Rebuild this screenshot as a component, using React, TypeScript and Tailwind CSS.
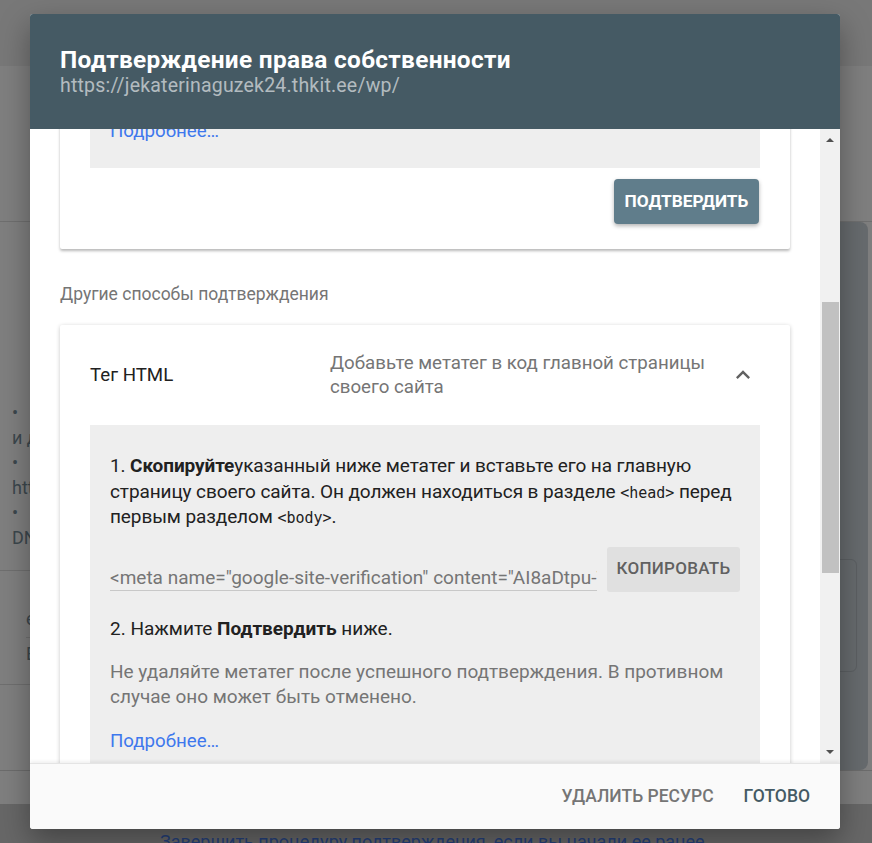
function ExpandLess() {
  return (
    <svg viewBox="0 0 24 24" className="w-[28px] h-[28px] fill-[#616161]">
      <path d="M12 8l-6 6 1.41 1.41L12 10.83l4.59 4.58L18 14z" />
    </svg>
  );
}

function FakeScrollbar() {
  return (
    <div className="w-[20px] shrink-0 bg-[#f1f1f1] flex flex-col items-center">
      <div className="h-[22px] flex items-center justify-center">
        <div className="w-0 h-0 border-l-[4px] border-r-[4px] border-b-[4px] border-l-transparent border-r-transparent border-b-[#505050]" />
      </div>
      <div className="h-[151px]" />
      <div className="w-[17px] h-[271px] bg-[#c1c1c1]" />
      <div className="flex-1" />
      <div className="h-[22px] flex items-center justify-center">
        <div className="w-0 h-0 border-l-[4px] border-r-[4px] border-t-[4px] border-l-transparent border-r-transparent border-t-[#505050]" />
      </div>
    </div>
  );
}

function BackgroundPage() {
  return (
    <div className="flex flex-col h-[843px] bg-[#7f7f7f] text-[#3c474d] text-[18px]">
      <div className="h-[66px] shrink-0 bg-[#787878]" />
      <div className="h-[156px] shrink-0 border-b border-[#6f6f6f]" />
      <div className="h-[549px] shrink-0 flex border-b border-[#6c6c6c]">
        <div className="w-[560px] shrink-0 flex flex-col">
          <div className="pl-[12px] pt-[178px] leading-[25px]">
            <div className="flex gap-[24px]"><span>•</span><span>Префикс URL: только адреса с указанным префиксом</span></div>
            <div>и другие протоколы</div>
            <div className="flex gap-[24px]"><span>•</span><span>Включает только URL с префиксом</span></div>
            <div>https://</div>
            <div className="flex gap-[24px]"><span>•</span><span>Требуется подтверждение через</span></div>
            <div>DNS</div>
          </div>
          <div className="mt-[20px] border-t border-[#6f6f6f] pl-[26px]">
            <div className="pt-[36px] pb-[6px] leading-[24px]">ещё один способ</div>
            <div className="border-t border-[#6f6f6f] pt-[4px] pb-[18px] leading-[24px]">Выберите тип ресурса</div>
          </div>
          <div className="border-t border-[#6f6f6f]" />
        </div>
        <div className="flex-1 pr-[4px]">
          <div className="h-[548px] bg-[#676b6e] rounded-[8px] pl-[30px] pr-[11px] pt-[337px]">
            <div className="h-[113px] border border-[#5c6063] rounded-[6px]" />
          </div>
        </div>
      </div>
      <div className="h-[33px] shrink-0" />
      <div className="flex-1 bg-[#676767] pl-[160px] pt-[28px] text-[#25407a] leading-[20px] whitespace-nowrap">
        Завершить процедуру подтверждения, если вы начали ее ранее
      </div>
    </div>
  );
}

export default function App() {
  return (
    <div className="relative w-full h-[843px] overflow-hidden font-[Roboto,sans-serif]">
      <BackgroundPage />

      <div className="absolute left-[30px] top-[14px] w-[810px] h-[815px] flex flex-col bg-white rounded-[3px] overflow-hidden shadow-[0_12px_30px_rgba(0,0,0,0.35)]">
        <div className="h-[115px] shrink-0 bg-[#455a64] px-[30px] pt-[32px]">
          <h1 className="text-[24.4px] leading-[28px] font-bold tracking-[0.3px] text-white">Подтверждение права собственности</h1>
          <div className="text-[19.5px] leading-[24px] tracking-[0.2px] text-white/60">https://jekaterinaguzek24.thkit.ee/wp/</div>
        </div>

        <div className="flex flex-1 min-h-0">
          <div className="flex-1 overflow-hidden">
            <div className="-mt-[10px] mx-[30px] bg-white px-[30px] pb-[25px] rounded-b-[2px] shadow-[0_2px_3px_rgba(0,0,0,0.28)]">
              <div className="bg-[#eeeeee] px-[20px] pb-[25px]">
                <div className="text-[18.7px] leading-[24px] text-[#3e78ed]">Подробнее…</div>
              </div>
              <div className="flex justify-end pt-[11px] pr-[1px]">
                <button className="w-[145px] h-[45px] bg-[#607d8b] rounded-[4px] text-white text-[17.3px] font-bold shadow-[0_2px_4px_rgba(0,0,0,0.3)]">
                  ПОДТВЕРДИТЬ
                </button>
              </div>
            </div>

            <div className="mt-[33px] ml-[30px] text-[17.5px] leading-[24px] text-[#757575]">Другие способы подтверждения</div>

            <div className="mt-[19px] mx-[30px] bg-white rounded-t-[2px] shadow-[0_1px_4px_rgba(0,0,0,0.22)]">
              <div className="h-[100px] flex items-center px-[30px]">
                <div className="w-[240px] text-[18.7px] text-[#212121]">Тег HTML</div>
                <div className="flex-1 text-[18.7px] leading-[24px] text-[#757575] pr-[20px]">
                  Добавьте метатег в код главной страницы своего сайта
                </div>
                <div className="w-[34px] flex justify-center">
                  <ExpandLess />
                </div>
              </div>

              <div className="mx-[30px] bg-[#eeeeee] pl-[20px] pr-[18px] pt-[28px] pb-[40px] text-[19px] text-[#212121]">
                <p className="leading-[25.5px] tracking-[-0.1px]">
                  1. <b>Скопируйте</b>указанный ниже метатег и вставьте его на главную страницу своего сайта. Он должен находиться в разделе{' '}
                  <span className="font-['DejaVu_Sans_Mono',monospace] text-[15px] leading-none tracking-normal">&lt;head&gt;</span> перед первым разделом{' '}
                  <span className="font-['DejaVu_Sans_Mono',monospace] text-[15px] leading-none tracking-normal">&lt;body&gt;</span>.
                </p>

                <div className="mt-[17px] flex gap-[10px] pr-[2px]">
                  <div className="flex-1 min-w-0 mt-[19px] h-[25px] border-b border-[#c8c8c8] overflow-hidden whitespace-nowrap leading-[24px] text-[#757575]">
                    &lt;meta name="google-site-verification" content="AI8aDtpu-VkQxL3pJq0-rWmYt5sKc2uRz7nHbEoF1gA" /&gt;
                  </div>
                  <button className="w-[133px] h-[45px] shrink-0 bg-[#e0e0e0] rounded-[3px] text-[17px] font-medium tracking-[0.3px] text-[#616161]">
                    КОПИРОВАТЬ
                  </button>
                </div>

                <p className="mt-[24px] leading-[26px]">
                  2. Нажмите <b>Подтвердить</b> ниже.
                </p>
                <p className="mt-[17px] leading-[25px] text-[#757575]">
                  Не удаляйте метатег после успешного подтверждения. В противном случае оно может быть отменено.
                </p>
                <div className="mt-[19px] leading-[26px] text-[18.7px] text-[#3e78ed]">Подробнее…</div>
              </div>
            </div>
          </div>
          <FakeScrollbar />
        </div>

        <div className="h-[66px] shrink-0 bg-[#fafafa] border-t border-[#e4e4e4] shadow-[0_-2px_3px_rgba(0,0,0,0.06)] flex items-center justify-end gap-[30px] pr-[30px] text-[17.5px] font-medium">
          <span className="text-[#757575]">УДАЛИТЬ РЕСУРС</span>
          <span className="text-[#455a64]">ГОТОВО</span>
        </div>
      </div>
    </div>
  );
}
